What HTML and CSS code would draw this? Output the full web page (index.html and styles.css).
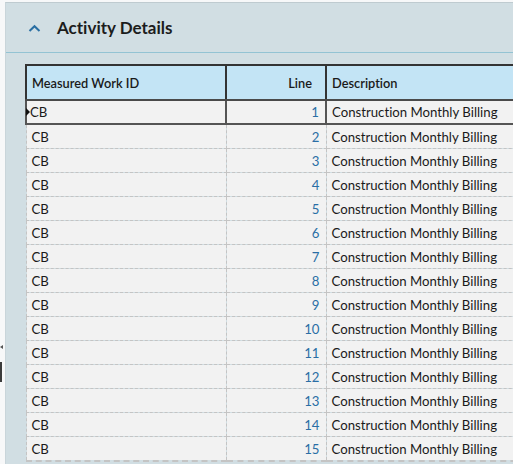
FILE: index.html
```html
<!DOCTYPE html>
<html>
<head>
<meta charset="utf-8">
<link rel="stylesheet" href="styles.css">
</head>
<body>
<div class="page">
  <div class="gutter">
    <span class="split-arrow"></span>
    <span class="split-bar"></span>
  </div>
  <section class="panel">
    <header class="panel-head">
      <svg class="chev" width="13" height="9" viewBox="0 0 13 9"><path d="M1.5 7 L6.5 2.2 L11.5 7" fill="none" stroke="#2a6fa3" stroke-width="2"/></svg>
      <h2 class="title">Activity Details</h2>
    </header>
    <div class="panel-body">
      <table class="grid">
        <colgroup><col class="c1"><col class="c2"><col class="c3"></colgroup>
        <thead>
          <tr><th class="id">Measured Work ID</th><th class="num">Line</th><th class="desc">Description</th></tr>
        </thead>
        <tbody id="rows"></tbody>
      </table>
    </div>
  </section>
</div>
<script>
  var tb = document.getElementById('rows');
  var h = '';
  for (var i = 1; i <= 15; i++) {
    h += '<tr' + (i === 1 ? ' class="sel"' : '') + '><td class="id">' + (i === 1 ? '<span class="ptr"></span>' : '') + 'CB</td><td class="num">' + i + '</td><td class="desc">Construction Monthly Billing</td></tr>';
  }
  tb.innerHTML = h;
</script>
</body>
</html>
```
FILE: styles.css
```css
html, body { margin: 0; padding: 0; }
body {
  font-family: Lato, "Open Sans", sans-serif;
  font-variant-ligatures: none;
  background: #f5f6f7;
  width: 513px;
  height: 464px;
  overflow: hidden;
}
.page {
  display: flex;
  height: 464px;
  padding-top: 2px;
  box-sizing: border-box;
  background: #f7f8f9;
}
.gutter {
  width: 5px;
  flex: none;
  position: relative;
}
.split-arrow {
  position: absolute;
  left: 0;
  top: 343px;
  width: 0; height: 0;
  border-top: 2px solid transparent;
  border-bottom: 2px solid transparent;
  border-right: 3px solid #555;
}
.split-bar {
  position: absolute;
  left: 0;
  top: 360px;
  width: 2px;
  height: 20px;
  background: #3c3c3c;
}
.panel {
  flex: 1;
  min-width: 0;
  background: #d1dee3;
  border-top: 1px solid #bfcbd0;
  border-left: 1px solid #c9d5da;
  overflow: hidden;
}
.panel-head {
  display: flex;
  align-items: center;
  border-bottom: 1px solid #93c3d3;
  box-sizing: border-box;
  height: 50px;
  padding-left: 22px;
}
.chev { margin-top: 1px; }
.title {
  margin: 0 0 0 16px;
  font-size: 17px;
  font-weight: 700;
  color: #1c1c1c;
}
.panel-body {
  padding: 11px 0 0 19px;
}
.grid {
  border-collapse: collapse;
  table-layout: fixed;
  width: 520px;
  font-size: 13.2px;
  color: #1a1a1a;
}
.c1 { width: 200px; }
.c2 { width: 100px; }
.c3 { width: 220px; }
.grid th {
  background: #c3e4f5;
  height: 33px;
  padding: 0 5px;
  font-weight: 600;
  font-size: 12.8px;
  text-align: left;
  border: 2px solid #333;
  border-bottom-color: #4a4a4a;
}
.grid th.num { text-align: right; padding-right: 13px; }
.grid td {
  height: 23px;
  padding: 0 5px;
  background: #f2f2f2;
  border: 1px dashed #c4c4c4;
  white-space: nowrap;
  position: relative;
}
.grid td.num { text-align: right; color: #2a6ea5; padding-right: 6px; }
.grid td.desc { padding-left: 5px; }
.grid tr.sel td {
  height: 22px;
  border-bottom: 2px solid #555;
  border-left: 2px solid #555;
  border-right: 2px solid #555;
}
.grid tr.sel td.id { padding-left: 3px; }
.grid tbody tr:last-child td { border-bottom: 2px dashed #c4c4c4; }
.ptr {
  position: absolute;
  left: -1px;
  top: 7px;
  width: 0; height: 0;
  border-top: 4px solid transparent;
  border-bottom: 4px solid transparent;
  border-left: 4px solid #111;
}
```
